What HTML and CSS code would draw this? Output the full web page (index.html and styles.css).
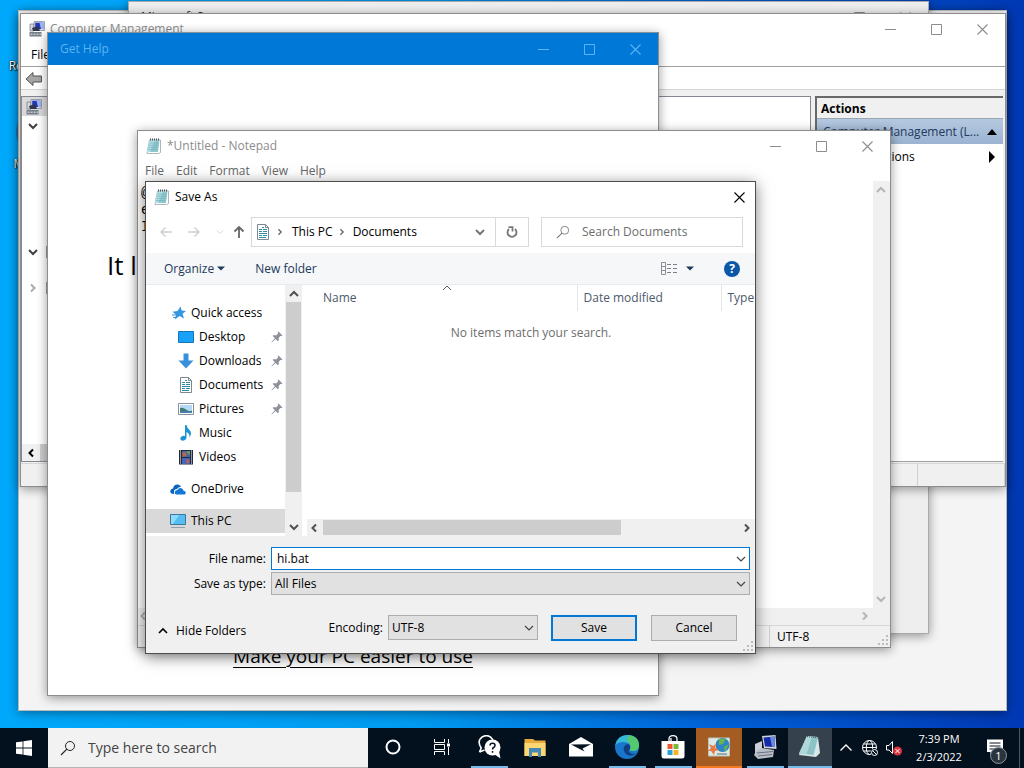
FILE: index.html
```html
<!DOCTYPE html>
<html lang="en">
<head>
    <meta charset="UTF-8">
    <meta name="viewport" content="width=device-width, initial-scale=1.0">
    <title>Save As</title>
    <link rel="stylesheet" href="styles.css">
</head>
<body>
    <!-- Shared icons -->
    <svg class="sprite" aria-hidden="true">
        <symbol id="i-min" viewBox="0 0 11 11"><path d="M0 5.500H11" fill="none" stroke="currentColor"/></symbol>
        <symbol id="i-max" viewBox="0 0 11 11"><path d="M.5 .5H10.500V10.500H.5Z" fill="none" stroke="currentColor"/></symbol>
        <symbol id="i-close" viewBox="0 0 11 11"><path d="M.5 .5L10.500 10.500M10.500 .5L.5 10.500" fill="none" stroke="currentColor" stroke-width="1.1"/></symbol>
        <symbol id="i-down" viewBox="0 0 10 10"><path d="M1 3L5 7L9 3" fill="none" stroke="currentColor" stroke-width="var(--w, 2)"/></symbol>
        <symbol id="i-up" viewBox="0 0 10 10"><path d="M1 7L5 3L9 7" fill="none" stroke="currentColor" stroke-width="var(--w, 2)"/></symbol>
        <symbol id="i-left" viewBox="0 0 10 10"><path d="M7 1.500L3.500 5L7 8.500" fill="none" stroke="currentColor" stroke-width="var(--w, 2)"/></symbol>
        <symbol id="i-right" viewBox="0 0 10 10"><path d="M3 1.500L6.500 5L3 8.500" fill="none" stroke="currentColor" stroke-width="var(--w, 2)"/></symbol>
        <symbol id="i-caret" viewBox="0 0 8 5"><path d="M0 .5H8L4 4.500Z" fill="currentColor"/></symbol>
        <symbol id="i-grip" viewBox="0 0 10 10"><path d="M8 0h2v2h-2zM8 4h2v2h-2zM8 8h2v2h-2zM4 4h2v2h-2zM4 8h2v2h-2zM0 8h2v2h-2z" fill="#bcbcbc"/></symbol>
        <symbol id="i-search" viewBox="0 0 16 16"><circle cx="10" cy="6" r="4.500" fill="none" stroke="currentColor"/><path d="M6.800 9.200L1 15" fill="none" stroke="currentColor" stroke-width="1.200"/></symbol>
        <symbol id="i-notepad" viewBox="0 0 16 16">
            <path d="M3.500 2H14.500V14.500L12.500 15.500H1Z" fill="#fff" stroke="#8a9a9c" stroke-width=".7"/>
            <path d="M3.500 2.500H13.500L12 14H.8Z" fill="#8fc9d0"/>
            <path d="M3.500 2.500H9L4 14H.8Z" fill="#b5dfe2"/>
            <path d="M3.500 5H12.500M3 7.200H12.200M2.500 9.400H12M2 11.600H11.500" stroke="#68aab3" stroke-width=".6"/>
            <path d="M4 1.500H14" stroke="#455" stroke-width="2" stroke-dasharray="1 1"/>
        </symbol>
        <symbol id="i-mgmt" viewBox="0 0 16 16">
            <path d="M1 3H5V10H1Z" fill="#d4d7de" stroke="#6b7280" stroke-width=".7"/>
            <path d="M5 .5H15.500V9.500H5Z" fill="#d3dae6" stroke="#7b8594" stroke-width=".7"/>
            <path d="M6.200 1.700H14.300V8H6.200Z" fill="#2436b8"/>
            <path d="M10.500 1.700H14.300V8H12Z" fill="#98b6f1"/>
            <path d="M3 7L9 5L11 10H4Z" fill="#30364e"/>
            <path d="M.5 11H12.500V15.500H.5Z" fill="#777f88"/>
            <path d="M1.500 13.200H12" stroke="#e6e8eb" stroke-dasharray="2 1"/>
        </symbol>
        <symbol id="i-doc" viewBox="0 0 16 16">
            <path d="M2.500 .5H10.500L13.500 3.500V15.500H2.500Z" fill="#fff" stroke="#7d8890"/>
            <path d="M10.500 .5V3.500H13.500" fill="none" stroke="#7d8890"/>
            <path d="M7 3.500H9M4 5.500H7M8 5.500H12M4 7.500H7M8 7.500H12M4 9.500H12M4 11.500H7M8 11.500H12M4 13.500H11" stroke="#2f8ea6"/>
        </symbol>
        <symbol id="i-pin" viewBox="0 0 12 12"><path d="M7.500 .5L11.500 4.500L10.300 5.300L9.600 4.800L7.600 7L7.900 9.200L6.800 10.200L4.600 7.900L.8 11.400L.5 11.100L3.900 7.300L1.700 5.100L2.700 4.100L5 4.400L7.200 2.400L6.700 1.600Z" fill="#8c9298"/></symbol>
    </svg>

    <main class="desktop">
        <ul class="shortcuts">
            <li><span class="shortcut-icon"></span>Recycle Bin</li>
            <li><span class="shortcut-icon edge"></span>Microsoft<br>Edge</li>
        </ul>

        <section class="window settings" aria-label="Settings"></section>

        <section class="window store" aria-label="Microsoft S">
            <header class="titlebar">
                <h2>Microsoft S</h2>
                <div class="controls">
                    <button aria-label="Minimize"><svg><use href="#i-min"/></svg></button>
                    <button aria-label="Maximize"><svg><use href="#i-max"/></svg></button>
                    <button aria-label="Close"><svg><use href="#i-close"/></svg></button>
                </div>
            </header>
        </section>

        <section class="window management" aria-label="Computer Management">
            <header class="titlebar">
                <svg class="app-icon"><use href="#i-mgmt"/></svg>
                <h2>Computer Management</h2>
                <div class="controls">
                    <button aria-label="Minimize"><svg><use href="#i-min"/></svg></button>
                    <button aria-label="Maximize"><svg><use href="#i-max"/></svg></button>
                    <button aria-label="Close"><svg><use href="#i-close"/></svg></button>
                </div>
            </header>
            <nav class="menubar"><button>File</button></nav>
            <div class="toolbar">
                <button aria-label="Back">
                    <svg viewBox="0 0 18 16"><path d="M1 8L8 1.500V5H16.500V11H8V14.500Z" fill="#a5a5a5" stroke="#555"/></svg>
                </button>
            </div>
            <div class="panes">
                <div class="pane tree">
                    <div class="tree-root"><svg><use href="#i-mgmt"/></svg></div>
                    <div class="tree-node"><svg><use href="#i-down"/></svg></div>
                    <div class="tree-node second"><svg><use href="#i-down"/></svg><span class="tools-icon"></span></div>
                    <div class="tree-node third"><svg class="faint"><use href="#i-right"/></svg><span class="tools-icon"></span></div>
                    <div class="tree-scroll"><svg><use href="#i-left"/></svg><span></span></div>
                </div>
                <div class="pane center"></div>
                <aside class="pane actions">
                    <h3>Actions</h3>
                    <button class="group">Computer Management (L...<svg viewBox="0 0 10 6"><path d="M0 6L5 0L10 6Z"/></svg></button>
                    <button class="more">More Actions<svg viewBox="0 0 6 12"><path d="M0 0L6 6L0 12Z"/></svg></button>
                </aside>
            </div>
            <footer class="statusbar"><span></span><span></span></footer>
        </section>

        <section class="window help" aria-label="Get Help">
            <header class="titlebar">
                <h2>Get Help</h2>
                <div class="controls">
                    <button aria-label="Minimize"><svg><use href="#i-min"/></svg></button>
                    <button aria-label="Maximize"><svg><use href="#i-max"/></svg></button>
                    <button aria-label="Close"><svg><use href="#i-close"/></svg></button>
                </div>
            </header>
            <div class="help-body">
                <h1>It l</h1>
                <a href="#">Make your PC easier to use</a>
            </div>
        </section>

        <section class="window notepad" aria-label="Notepad">
            <header class="titlebar">
                <svg class="app-icon"><use href="#i-notepad"/></svg>
                <h2>*Untitled - Notepad</h2>
                <div class="controls">
                    <button aria-label="Minimize"><svg><use href="#i-min"/></svg></button>
                    <button aria-label="Maximize"><svg><use href="#i-max"/></svg></button>
                    <button aria-label="Close"><svg><use href="#i-close"/></svg></button>
                </div>
            </header>
            <nav class="menubar">
                <button>File</button>
                <button>Edit</button>
                <button>Format</button>
                <button>View</button>
                <button>Help</button>
            </nav>
            <div class="editor">
                <textarea aria-label="Text editor" spellcheck="false">@
e
I</textarea>
                <div class="scroll-y"><svg><use href="#i-up"/></svg><svg><use href="#i-down"/></svg></div>
            </div>
            <div class="scroll-x"><svg><use href="#i-left"/></svg><svg><use href="#i-right"/></svg></div>
            <footer class="statusbar"><span>UTF-8</span><svg class="grip"><use href="#i-grip"/></svg></footer>
        </section>

        <section class="window dialog" role="dialog" aria-label="Save As">
            <header class="titlebar">
                <svg class="app-icon"><use href="#i-notepad"/></svg>
                <h2>Save As</h2>
                <div class="controls">
                    <button aria-label="Close"><svg><use href="#i-close"/></svg></button>
                </div>
            </header>

            <div class="navbar">
                <div class="history">
                    <button disabled aria-label="Back"><svg viewBox="0 0 12 12"><path d="M12 6H1M5.500 1.500L1 6L5.500 10.500"/></svg></button>
                    <button disabled aria-label="Forward"><svg viewBox="0 0 12 12"><path d="M0 6H11M6.500 1.500L11 6L6.500 10.500"/></svg></button>
                    <button disabled class="recent" aria-label="Recent locations"><svg><use href="#i-down"/></svg></button>
                    <button class="up" aria-label="Up"><svg viewBox="0 0 12 14"><path d="M6 13V2M1.500 6.500L6 2L10.500 6.500"/></svg></button>
                </div>
                <div class="address">
                    <svg class="place-icon"><use href="#i-doc"/></svg>
                    <svg class="sep"><use href="#i-right"/></svg>
                    <button>This PC</button>
                    <svg class="sep"><use href="#i-right"/></svg>
                    <button>Documents</button>
                    <button class="expand" aria-label="Previous locations"><svg><use href="#i-down"/></svg></button>
                    <button class="refresh" aria-label="Refresh"><svg viewBox="0 0 12 12"><path d="M3 3A4.500 4.500 0 1 0 9 3"/><path d="M2.500 1.200H6.500V5.500"/></svg></button>
                </div>
                <label class="search">
                    <svg><use href="#i-search"/></svg>
                    <input type="text" placeholder="Search Documents" aria-label="Search Documents">
                </label>
            </div>

            <div class="commands">
                <button>Organize<svg class="caret"><use href="#i-caret"/></svg></button>
                <button>New folder</button>
                <button class="view" aria-label="Change your view">
                    <svg class="view-icon" viewBox="0 0 17 13"><path d="M.5 .5H4.500V12.500H.5ZM.5 4.500H4.500M.5 8.500H4.500" fill="none" stroke="#8a8f96"/><path d="M6 2.500H10M12 2.500H16M6 6.500H10M12 6.500H16M6 10.500H10M12 10.500H16" stroke="#7b8087"/></svg>
                    <svg class="caret"><use href="#i-caret"/></svg>
                </button>
                <button class="help-button" aria-label="Get help">?</button>
            </div>

            <div class="browser">
                <nav class="places">
                    <ul>
                        <li><a href="#"><svg viewBox="0 0 16 16"><path d="M9.500 1.500L10.700 5.600L15 6L11.600 8.800L13 13.500L8.500 11L4 14.500L5 9.800L1.500 6.800L6.500 6Z" fill="#3596e0"/><path d="M1 10H5M2 12.500H5" stroke="#3596e0"/></svg>Quick access</a></li>
                        <li class="sub"><a href="#"><svg viewBox="0 0 16 16"><path d="M.5 2.500H15.500V13.500H.5Z" fill="#1ba0f8" stroke="#1477b8"/></svg>Desktop<svg class="pin"><use href="#i-pin"/></svg></a></li>
                        <li class="sub"><a href="#"><svg viewBox="0 0 16 16"><path d="M5.500 .5H10.500V7.500H15.500L8 15.500L.5 7.500H5.500Z" fill="#3a8fdd"/></svg>Downloads<svg class="pin"><use href="#i-pin"/></svg></a></li>
                        <li class="sub"><a href="#"><svg><use href="#i-doc"/></svg>Documents<svg class="pin"><use href="#i-pin"/></svg></a></li>
                        <li class="sub"><a href="#"><svg viewBox="0 0 16 16"><path d="M.5 2.500H15.500V13.500H.5Z" fill="#fff" stroke="#87919b"/><path d="M2 4H14V12H2Z" fill="#b5d8f4"/><path d="M2 7Q5 6 8 8.500T14 9.500V12H2Z" fill="#3d7c75"/><path d="M2 10.500H14V12H2Z" fill="#4b80b8"/></svg>Pictures<svg class="pin"><use href="#i-pin"/></svg></a></li>
                        <li class="sub"><a href="#"><svg viewBox="0 0 16 16"><path d="M7 0H8.500Q9 3 11.500 5Q14.500 8 11.500 12.500Q12 8.500 8.500 7V13Q7.500 16 4.500 15.800Q1.500 15 2.500 12.500Q4.500 10 7 11Z" fill="#1f93cf"/></svg>Music</a></li>
                        <li class="sub"><a href="#"><svg viewBox="0 0 16 16"><path d="M1 1H15V15.500H1Z" fill="#252b3c"/><path d="M4 2H12V8H4Z" fill="#4169a8"/><path d="M4 9H12V15H4Z" fill="#4564ba"/><path d="M4 4L7 3L9 6L5 8ZM8 10L12 12L9 15Z" fill="#bf6444"/><path d="M8 3L12 2V6Z" fill="#6aa25d"/><path d="M2.500 1.500V15.500M13.500 1.500V15.500" stroke="#fff" stroke-dasharray="1 1"/></svg>Videos</a></li>
                        <li class="root"><a href="#"><svg viewBox="0 0 16 16"><path d="M4 13Q0 13 .3 10Q.5 7.500 3 7.500Q4 3 8 3.500Q10.500 4 11 6Q8.500 5.500 7 8Q4 8 4 10.500Z" fill="#0b63bd"/><path d="M6 13.500Q4.500 13 4.700 11Q5.300 9 7.500 9Q9 6 12 7.500Q13 8 13.300 9.500Q16 10 15.800 12Q15.500 13.500 14 13.500Z" fill="#1278d5"/></svg>OneDrive</a></li>
                        <li class="root active"><a href="#" aria-current="true"><svg viewBox="0 0 16 16"><path d="M.5 1.500H15.500V11.500H.5Z" fill="#55bdf2" stroke="#39779c"/><path d="M1 2H9L3 11H1Z" fill="#8edbff"/><path d="M1 14.500H15" stroke="#8aa0af"/></svg>This PC</a></li>
                    </ul>
                </nav>
                <div class="places-scroll"><svg><use href="#i-up"/></svg><span></span><svg><use href="#i-down"/></svg></div>
                <div class="files">
                    <table>
                        <thead>
                            <tr>
                                <th class="name">Name<svg><use href="#i-up"/></svg></th>
                                <th class="date">Date modified</th>
                                <th class="type">Type</th>
                            </tr>
                        </thead>
                        <tbody>
                            <tr><td colspan="3">No items match your search.</td></tr>
                        </tbody>
                    </table>
                    <div class="files-scroll"><svg><use href="#i-left"/></svg><span></span><svg><use href="#i-right"/></svg></div>
                </div>
            </div>

            <form class="fields" onsubmit="return false">
                <label for="file-name">File name:</label>
                <div class="combo editable">
                    <input id="file-name" type="text" value="hi.bat">
                    <svg><use href="#i-down"/></svg>
                </div>
                <label for="file-type">Save as type:</label>
                <div class="combo">
                    <select id="file-type"><option>All Files</option></select>
                    <svg><use href="#i-down"/></svg>
                </div>
            </form>

            <footer class="dialog-footer">
                <button class="folders"><svg><use href="#i-up"/></svg>Hide Folders</button>
                <label for="encoding">Encoding:</label>
                <div class="combo">
                    <select id="encoding"><option>UTF-8</option></select>
                    <svg><use href="#i-down"/></svg>
                </div>
                <button class="push default">Save</button>
                <button class="push">Cancel</button>
                <svg class="grip"><use href="#i-grip"/></svg>
            </footer>
        </section>
    </main>

    <footer class="taskbar">
        <button class="start" aria-label="Start"><svg viewBox="0 0 16 16"><path d="M0 2.300L6.600 1.400V7.600H0ZM7.400 1.300L16 0V7.600H7.400ZM0 8.400H6.600V14.600L0 13.700ZM7.400 8.400H16V16L7.400 14.700Z" fill="#fff"/></svg></button>
        <label class="task-search">
            <svg><use href="#i-search"/></svg>
            <input type="text" placeholder="Type here to search" aria-label="Type here to search">
        </label>
        <div class="apps">
            <button class="wide" aria-label="Cortana"><svg viewBox="0 0 24 24"><circle cx="12" cy="12" r="6.500" fill="none" stroke="#fff" stroke-width="2"/></svg></button>
            <button class="wide" aria-label="Task View"><svg viewBox="0 0 24 24"><path d="M4.500 4V7.500H14.500V4M4.500 20V16.500H14.500V20M4.500 9.500H14.500V14.500H4.500ZM18.500 4V8M18.500 12V20" fill="none" stroke="#fff"/><path d="M17 8.500H20V11.500H17Z" fill="#fff"/></svg></button>
            <button class="running" aria-label="Get Help"><svg viewBox="0 0 24 24"><path d="M2.500 17L4.200 13Q-.5 6 5.500 1.700Q12-1.500 16 5" fill="none" stroke="#fff" stroke-width="1.600"/><path d="M2.500 17L7.500 15" stroke="#fff" stroke-width="1.600"/><circle cx="15.500" cy="12.500" r="8" fill="#fff"/><path d="M17 19L23.500 23.500L22 16Z" fill="#fff"/><path d="M13 10.500Q13 8.300 15.500 8.300Q18 8.300 18 10.400Q18 11.700 16.600 12.500Q15.500 13.200 15.500 14.500M15.500 16V17.700" fill="none" stroke="#071522" stroke-width="1.500"/></svg></button>
            <button aria-label="File Explorer"><svg viewBox="0 0 24 24"><path d="M1.500 4H10L12 5.500H22.500V21H1.500Z" fill="#e9aa3c"/><path d="M1.500 8H22.500V21H1.500Z" fill="#fbd774"/><path d="M6 13H18V22H15V17.500H9V22H6Z" fill="#4588b5"/></svg></button>
            <button aria-label="Mail"><svg viewBox="0 0 24 24"><path d="M0 9L12 2L24 9V21.500H0Z" fill="#fff"/><path d="M2 9.500L22 9.300L13.500 13.500L15.500 16.500L2 9.500Z" fill="#071522"/></svg></button>
            <button class="running" aria-label="Microsoft Edge"><svg viewBox="0 0 24 24"><circle cx="12" cy="12" r="12" fill="#1976ca"/><path d="M.3 10Q3-.1 12.500 0Q24 .5 24 10.500Q23.500 16 17.500 16Q14.500 15.800 15 14Q16.800 9 11.500 7.500Q4.500 6 .3 10Z" fill="#35b9d8"/><path d="M13 0Q24 1 24 10.500Q23.500 16 17.500 16Q14.500 15.800 15 14Q17 9 12 6Z" fill="#55c86f"/><path d="M15 14Q16 9.500 12 9Q6.500 12 10 18Q14.500 23 21.500 18.500Q15 20 13.300 15.500Z" fill="#103e83"/></svg></button>
            <button class="running" aria-label="Microsoft Store"><svg viewBox="0 0 24 24"><path d="M8 7V4Q8 .7 12 .7Q16 .7 16 4V7M10 6V3" fill="none" stroke="#fff" stroke-width="1.300"/><path d="M.5 6H23.500V21Q23.500 23.500 21 23.500H3Q.5 23.500 .5 21Z" fill="#fff"/><path d="M6.500 9H11.500V14H6.500Z" fill="#ed5a32"/><path d="M12.500 9H17.500V14H12.500Z" fill="#7cb83b"/><path d="M6.500 15H11.500V20H6.500Z" fill="#28a0da"/><path d="M12.500 15H17.500V20H12.500Z" fill="#f6b524"/></svg></button>
            <button class="alert" aria-label="Support"><svg viewBox="0 0 24 24"><path d="M1.500 3H22.500V21H1.500Z" fill="#dfe8e2" stroke="#b7c5c1"/><circle cx="15.500" cy="10" r="7" fill="#2d85c5"/><path d="M12 4L19 3.500L16 9L12 10ZM17 12L22 9L18 17Z" fill="#68b54c"/><path d="M2 9L6 11L9 9L8 13L12 15L8 16L7 20L4 16L1 16L4 13Z" fill="#e67a45"/><path d="M10 18H20V20H10Z" fill="#9baaa9"/></svg></button>
            <button class="running" aria-label="Computer Management"><svg viewBox="0 0 24 24"><path d="M2 9L9 6V17L2 20Z" fill="#cbd0d8"/><path d="M9 1L22.500 0L23.500 14L11 13Z" fill="#d0d4dc"/><path d="M10.500 2.500L21.500 1.500L22 12L12 11.500Z" fill="#162ba7"/><path d="M17 2L21.500 1.500L22 12L19 11.700Z" fill="#678be2"/><path d="M3 16L9 13L21 15L20 22L5 24L1 20Z" fill="#b9bdc4"/><path d="M4 18L20 16.500M5 21L19 19.500" stroke="#677180"/></svg></button>
            <button class="current" aria-label="Notepad"><svg viewBox="0 0 24 24"><path d="M9 1L20 2L22 18L18 22L1 20Z" fill="#d9e7e6"/><path d="M9 1L20 2.500L15.500 20L1 18.500Z" fill="#8bc3c7"/><path d="M9 1L14 2L8.500 19L1 18.500Z" fill="#b1d8d9"/><path d="M9 1.500L20 3" stroke="#38565c" stroke-dasharray="1 1"/></svg></button>
        </div>
        <div class="tray">
            <button aria-label="Show hidden icons"><svg class="thin" viewBox="0 0 12 12"><path d="M.5 8.500L6 3L11.500 8.500" fill="none" stroke="#fff" stroke-width="1.300"/></svg></button>
            <button aria-label="Network"><svg viewBox="0 0 16 16"><circle cx="7.500" cy="7.500" r="7" fill="none" stroke="#fff"/><ellipse cx="7.500" cy="7.500" rx="3.200" ry="7" fill="none" stroke="#fff"/><path d="M.5 7.500H14.500M1.500 4H13.500M1.500 11H9" stroke="#fff"/><circle cx="12.500" cy="12.500" r="4" fill="#03101d"/><circle cx="12.500" cy="12.500" r="3" fill="none" stroke="#fff"/><path d="M10.500 10.500L14.500 14.500" stroke="#fff"/></svg></button>
            <button aria-label="Volume muted"><svg viewBox="0 0 16 16"><path d="M.5 5.500H3L6.500 1.500V13.500L3 10H.5Z" fill="none" stroke="#fff"/><circle cx="11.500" cy="11" r="4.500" fill="#da3440"/><path d="M9.500 9L13.500 13M13.500 9L9.500 13" stroke="#fff"/></svg></button>
            <button class="clock"><time>7:39 PM</time><time>2/3/2022</time></button>
            <button class="notices" aria-label="1 notification"><svg viewBox="0 0 24 24"><path d="M3 3.500H19V16H10L6.500 19V16H3Z" fill="#fff"/><path d="M5.500 7H16.500M5.500 10H16.500M5.500 13H12" stroke="#071522"/></svg><span>1</span></button>
        </div>
    </footer>
</body>
</html>
```

FILE: styles.css
```css
:root {
    --accent: #0078d7;
    --face: #f0f0f0;
    --muted: #8c8c8c;
    --line: #d9d9d9;
    --shadow: 0 2px 10px rgba(0, 0, 0, 0.4);
}

* {
    margin: 0;
    padding: 0;
    box-sizing: border-box;
}

html, body {
    height: 100%;
}

body {
    display: flex;
    flex-direction: column;
    overflow: hidden;
    font-family: "Open Sans", "Noto Sans", sans-serif;
    font-size: 12px;
    line-height: 16px;
    color: #000;
}

button, input, select, textarea {
    font: inherit;
    color: inherit;
    background: none;
    border: 0;
    border-radius: 0;
    outline: 0;
}

h1, h2, h3 {
    font-size: 12px;
    font-weight: normal;
}

ul {
    list-style: none;
}

a {
    color: inherit;
    text-decoration: none;
}

svg {
    display: block;
    flex-shrink: 0;
    width: 10px;
    height: 10px;
}

.sprite {
    position: absolute;
    width: 0;
    height: 0;
}

/* Desktop */
.desktop {
    position: relative;
    flex: 1;
    min-height: 0;
    background: linear-gradient(90deg, #00a8fb 0%, #009bf0 40%, #0060d6 70%, #0038b4 100%);
}

.shortcuts {
    display: flex;
    flex-direction: column;
    gap: 24px;
    width: 80px;
    padding-top: 10px;
    text-align: center;
    color: #fff;
    text-shadow: 0 0 2px #000, 1px 1px 1px #000;
}

.shortcut-icon {
    display: block;
    width: 48px;
    height: 48px;
    margin: 0 auto;
}

.shortcut-icon.edge {
    margin-top: 10px;
    border-radius: 24px;
    background: #2a6fb0;
}

/* Windows */
.window {
    position: absolute;
    display: flex;
    flex-direction: column;
    background: #fff;
    border: 1px solid #8d8d8d;
    box-shadow: var(--shadow);
    overflow: hidden;
}

.titlebar {
    display: flex;
    align-items: center;
    flex-shrink: 0;
    height: 30px;
    color: var(--muted);
}

.app-icon {
    width: 16px;
    height: 16px;
    margin: 0 5px 0 8px;
}

.controls {
    display: flex;
    margin-left: auto;
}

.controls button {
    width: 46px;
    height: 30px;
    padding-left: 18px;
}

.controls svg {
    width: 11px;
    height: 11px;
}

.menubar {
    display: flex;
    flex-shrink: 0;
}

.statusbar {
    display: flex;
    flex-shrink: 0;
    background: var(--face);
    border-top: 1px solid #d7d7d7;
}

.settings {
    left: 18px;
    top: 10px;
    width: 989px;
    height: 701px;
    background: #f4f4f4;
    border-color: #bbb;
}

.store {
    left: 128px;
    top: 1px;
    width: 801px;
    height: 633px;
    background: #eee;
    border-color: #aaa;
}

.store h2 {
    padding-left: 12px;
    color: #333;
}

/* Computer Management */
.management {
    left: 20px;
    top: 13px;
    width: 986px;
    height: 474px;
}

.management .menubar {
    height: 23px;
    padding-left: 10px;
    border-bottom: 1px solid #a0a0a0;
}

.toolbar {
    height: 23px;
    padding: 4px;
    border-bottom: 1px solid #d5d5d5;
}

.toolbar svg {
    width: 18px;
    height: 16px;
}

.panes {
    display: flex;
    flex: 1;
    gap: 4px;
    padding: 6px 2px 1px 0;
    background: var(--face);
}

.pane {
    background: #fff;
    border: 1px solid #828790;
}

.tree {
    display: flex;
    flex-direction: column;
    width: 200px;
}

.tree-root {
    padding: 2px 4px 1px;
    background: #d9d9d9;
}

.tree-root svg {
    width: 16px;
    height: 16px;
}

.tree-node {
    display: flex;
    align-items: center;
    gap: 8px;
    height: 20px;
    padding-left: 6px;
    color: #404040;
}

.tree-node.second {
    margin-top: 106px;
}

.tree-node.third {
    margin-top: 16px;
}

.tools-icon {
    width: 16px;
    height: 12px;
    background: #9a9a9a;
}

.faint {
    color: #aaa;
}

.tree-scroll {
    display: flex;
    align-items: center;
    gap: 4px;
    height: 17px;
    margin-top: auto;
    padding-left: 4px;
    background: var(--face);
}

.tree-scroll span {
    flex: 1;
    height: 17px;
    background: #cdcdcd;
}

.center {
    flex: 1;
}

.actions {
    width: 188px;
    border-width: 2px 0 1px 2px;
    border-color: #696969 #a0a0a0 #a0a0a0 #696969;
}

.actions h3 {
    height: 21px;
    padding: 3px 4px;
    font-weight: bold;
    background: var(--face);
    border-bottom: 1px solid #9aa6b2;
}

.actions button {
    display: flex;
    align-items: center;
    justify-content: space-between;
    width: 100%;
    height: 25px;
    padding: 0 6px;
    white-space: nowrap;
}

.actions .group {
    color: #1e395b;
    background: linear-gradient(#b5c8e0, #9bb4d2);
}

.actions .group svg {
    width: 10px;
    height: 6px;
}

.actions .more {
    padding: 0 8px 0 24px;
}

.actions .more svg {
    width: 6px;
    height: 12px;
}

.management .statusbar {
    height: 23px;
}

.management .statusbar span {
    flex: 1;
    border-right: 1px solid #d0d0d0;
}

.management .statusbar span:last-child {
    flex: 0 0 87px;
}

/* Get Help */
.help {
    left: 47px;
    top: 32px;
    width: 612px;
    height: 664px;
}

.help .titlebar {
    height: 32px;
    color: #5ab4f5;
    background: var(--accent);
}

.help h2 {
    padding-left: 12px;
}

.help-body {
    display: flex;
    flex-direction: column;
    flex: 1;
    justify-content: space-between;
    padding: 182px 59px 25px;
}

.help-body h1 {
    font-size: 26px;
    line-height: 36px;
}

.help-body a {
    align-self: center;
    font-size: 19px;
    line-height: 28px;
    text-decoration: underline;
    text-decoration-thickness: 1px;
    text-underline-offset: 4px;
}

/* Notepad */
.notepad {
    left: 137px;
    top: 130px;
    width: 754px;
    height: 518px;
}

.notepad .menubar {
    gap: 12px;
    height: 20px;
    padding-left: 7px;
    color: #666;
}

.editor {
    display: flex;
    flex: 1;
}

.editor textarea {
    flex: 1;
    padding: 4px 3px;
    font-family: "Liberation Mono", monospace;
    font-size: 14px;
    line-height: 17px;
    resize: none;
}

.scroll-y, .scroll-x {
    display: flex;
    justify-content: space-between;
    color: #b5b5b5;
    background: var(--face);
}

.scroll-y {
    flex-direction: column;
    width: 17px;
    padding: 4px 3px;
}

.scroll-x {
    padding: 3px 20px 4px 0;
}

.notepad .statusbar {
    justify-content: flex-end;
    height: 22px;
}

.notepad .statusbar span {
    width: 109px;
    padding: 3px 7px;
    border-left: 1px solid #d0d0d0;
}

.grip {
    align-self: flex-end;
    margin: 0 2px 2px 0;
}

/* Save As dialog */
.dialog {
    left: 145px;
    top: 181px;
    width: 611px;
    border-color: #4d4d4d;
    box-shadow: 0 3px 14px rgba(0, 0, 0, 0.5);
}

.dialog .titlebar {
    color: #000;
}

.dialog .controls button {
    width: 32px;
    padding-left: 11px;
}

.navbar {
    display: flex;
    align-items: center;
    padding: 5px 12px 6px 14px;
}

.history {
    display: flex;
    align-items: center;
    gap: 16px;
    width: 91px;
    --w: 1;
}

.history svg {
    width: 12px;
    height: 12px;
    fill: none;
    stroke: #cfcfcf;
    stroke-width: 1.4;
}

.history .recent svg {
    width: 8px;
    height: 8px;
    color: #ccc;
}

.history .recent {
    margin-right: -7px;
}

.history .up svg {
    height: 14px;
    stroke: #666;
    stroke-width: 1.8;
}

.address {
    display: flex;
    flex: 1;
    align-items: center;
    height: 30px;
    border: 1px solid var(--line);
}

.place-icon {
    width: 16px;
    height: 16px;
    margin: 0 5px 0 3px;
}

.sep {
    width: 8px;
    height: 8px;
    margin-right: 8px;
    color: #666;
    --w: 1.6;
}

.address button + .sep {
    margin: 0 7px 0 5px;
}

.address .expand {
    margin-left: auto;
    padding: 0 10px;
    color: #777;
}

.address .refresh {
    height: 28px;
    padding: 0 10px;
    border-left: 1px solid var(--line);
}

.refresh svg {
    width: 12px;
    height: 12px;
    fill: none;
    stroke: #777;
    stroke-width: 1.8;
}

.search {
    display: flex;
    align-items: center;
    gap: 12px;
    width: 202px;
    height: 30px;
    margin-left: 12px;
    padding-left: 14px;
    border: 1px solid var(--line);
    color: #777;
}

.search svg {
    width: 14px;
    height: 14px;
}

.search input, .task-search input {
    flex: 1;
    min-width: 0;
}

.search input::placeholder {
    color: #6d6d6d;
}

.commands {
    display: flex;
    align-items: center;
    gap: 30px;
    height: 32px;
    padding: 0 15px 0 18px;
    color: #1e395b;
    background: #f5f7f9;
    border-bottom: 1px solid #e8ebee;
}

.commands button {
    display: flex;
    align-items: center;
    gap: 3px;
}

.caret {
    width: 8px;
    height: 5px;
}

.commands .view {
    gap: 8px;
    margin-left: auto;
}

.view-icon {
    width: 17px;
    height: 13px;
}

.commands .help-button {
    justify-content: center;
    width: 16px;
    height: 16px;
    color: #fff;
    font-weight: bold;
    background: #0b57a8;
    border-radius: 50%;
}

.browser {
    display: flex;
    height: 251px;
}

.places {
    width: 139px;
    padding-top: 16px;
}

.places a {
    display: flex;
    align-items: center;
    gap: 4px;
    height: 24px;
    padding: 0 2px 0 25px;
}

.places svg {
    width: 16px;
    height: 16px;
}

.places .sub a {
    padding-left: 32px;
    gap: 5px;
}

.places .pin {
    width: 12px;
    height: 12px;
    margin-left: auto;
}

.places .root {
    margin-top: 8px;
}

.places .root a {
    padding-left: 24px;
    gap: 5px;
}

.places .active {
    background: #d9d9d9;
}

.places-scroll {
    display: flex;
    flex-direction: column;
    align-items: center;
    width: 17px;
    padding: 4px 0;
    color: #505050;
    background: var(--face);
}

.places-scroll span {
    flex: 1;
    width: 15px;
    margin: 3px 0 30px;
    background: #cdcdcd;
}

.files {
    display: flex;
    flex-direction: column;
    flex: 1;
    justify-content: space-between;
    min-width: 0;
    padding-left: 5px;
}

.files table {
    width: 100%;
    table-layout: fixed;
    border-collapse: collapse;
}

.files th {
    height: 26px;
    padding-left: 6px;
    font-weight: normal;
    text-align: left;
    color: #4c5a6b;
    border-right: 1px solid #e5e5e5;
}

.files .name {
    position: relative;
    padding-left: 16px;
}

.files .name svg {
    position: absolute;
    top: -2px;
    left: 50%;
    --w: 1;
}

.files .date {
    width: 144px;
}

.files .type {
    width: 34px;
    border-right: 0;
}

.files td {
    padding: 14px 0 0;
    text-align: center;
    color: #6d6d6d;
}

.files-scroll {
    display: flex;
    align-items: center;
    gap: 4px;
    height: 17px;
    padding: 0 3px 0 2px;
    color: #505050;
    background: var(--face);
}

.files-scroll span {
    flex: 1;
    height: 15px;
    margin-right: 117px;
    background: #cdcdcd;
}

.fields {
    display: grid;
    grid-template-columns: 120px 1fr;
    gap: 2px 5px;
    align-items: center;
    padding: 11px 5px 0 0;
    background: var(--face);
}

.fields label {
    text-align: right;
}

.combo {
    position: relative;
    --w: 1.2;
}

.combo input, .combo select {
    display: block;
    width: 100%;
    height: 23px;
    padding: 0 20px 0 3px;
    border: 1px solid #adadad;
    background: #e1e1e1;
    appearance: none;
}

.combo.editable input {
    padding-left: 5px;
    background: #fff;
    border-color: var(--accent);
}

.combo svg {
    position: absolute;
    top: 50%;
    right: 4px;
    margin-top: -5px;
    color: #444;
    pointer-events: none;
}

.dialog-footer {
    display: flex;
    align-items: flex-start;
    padding: 20px 2px 2px 12px;
    background: var(--face);
}

.dialog-footer .folders {
    display: flex;
    align-items: center;
    gap: 8px;
    margin-right: auto;
    padding-top: 8px;
    --w: 1.6;
}

.dialog-footer label {
    padding-top: 5px;
}

.dialog-footer .combo {
    width: 150px;
    margin: 0 13px 0 5px;
}

.dialog-footer select {
    height: 25px;
}

.push {
    width: 86px;
    height: 26px;
    margin-right: 14px;
    border: 1px solid #adadad;
    background: #e1e1e1;
}

.push.default {
    border: 2px solid var(--accent);
}

.dialog-footer .grip {
    margin: 26px 0 0 -8px;
}

/* Taskbar */
.taskbar {
    display: flex;
    flex-shrink: 0;
    height: 40px;
    color: #fff;
    background: #03101d;
}

.taskbar button {
    display: flex;
    align-items: center;
    justify-content: center;
}

.start {
    width: 48px;
}

.start svg {
    width: 16px;
    height: 16px;
}

.task-search {
    display: flex;
    align-items: center;
    flex: 0 1 320px;
    gap: 12px;
    padding-left: 12px;
    font-size: 14px;
    line-height: 20px;
    color: #222;
    background: #f2f2f2;
    border-bottom: 1px solid #b5b5b5;
}

.task-search svg {
    width: 16px;
    height: 16px;
}

.task-search input::placeholder {
    color: #444;
}

.apps {
    display: flex;
}

.apps button {
    width: 46px;
    border-bottom: 2px solid transparent;
}

.apps .wide {
    width: 49px;
}

.apps svg {
    width: 24px;
    height: 24px;
}

.apps .running {
    background: linear-gradient(#76b9ed, #76b9ed) center bottom / 37px 2px no-repeat border-box;
}

.apps .alert {
    background: #a45c23;
    border-bottom-color: #f47b20;
}

.apps .current {
    width: 44px;
    background: #35424d;
    border-bottom-color: #76b9ed;
}

.tray {
    display: flex;
    margin-left: auto;
}

.tray button {
    width: 24px;
}

.tray svg {
    width: 16px;
    height: 16px;
}

.tray svg.thin {
    width: 12px;
    height: 12px;
}

.tray .clock {
    flex-direction: column;
    width: 66px;
    font-size: 11px;
    line-height: 18px;
}

.tray .notices {
    position: relative;
    width: 48px;
    margin-right: 4px;
    border-right: 1px solid #555;
}

.tray .notices svg {
    width: 24px;
    height: 24px;
}

.notices span {
    position: absolute;
    right: 12px;
    bottom: 4px;
    width: 17px;
    height: 17px;
    font-size: 11px;
    line-height: 15px;
    background: #29343e;
    border: 1px solid #8b949c;
    border-radius: 50%;
}
```
